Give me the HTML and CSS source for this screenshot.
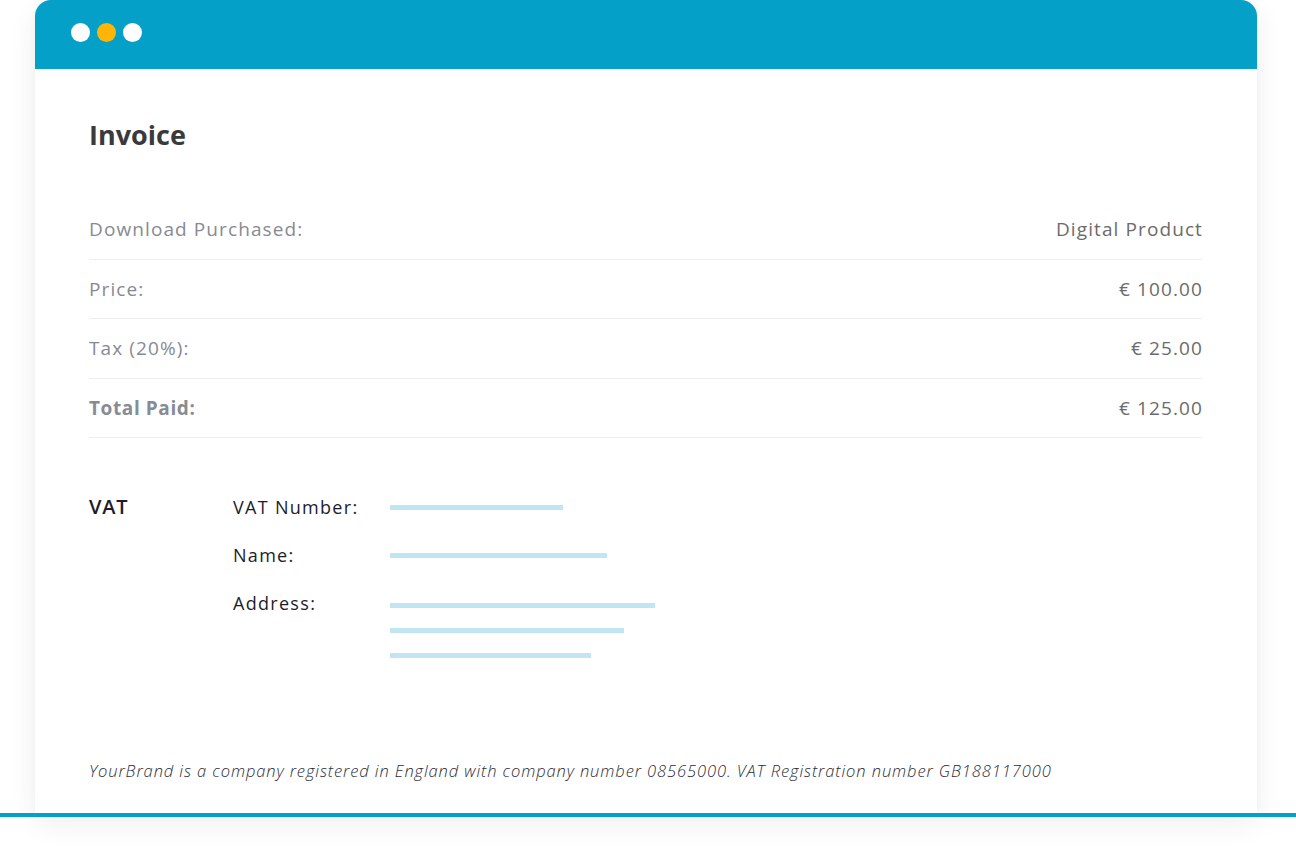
FILE: index.html
```html
<!DOCTYPE html>
<html>
<head>
<meta charset="utf-8">
<link rel="stylesheet" href="styles.css">
</head>
<body>
<div class="stage">
  <div class="card">
    <div class="card-header">
      <span class="dot dot-white"></span>
      <span class="dot dot-orange"></span>
      <span class="dot dot-white"></span>
    </div>
    <div class="card-body">
      <h1 class="title">Invoice</h1>
      <div class="rows">
        <div class="row"><span class="label">Download Purchased:</span><span class="value">Digital Product</span></div>
        <div class="row"><span class="label">Price:</span><span class="value">€ 100.00</span></div>
        <div class="row"><span class="label">Tax (20%):</span><span class="value">€ 25.00</span></div>
        <div class="row"><span class="label label-bold">Total Paid:</span><span class="value">€ 125.00</span></div>
      </div>
      <div class="vat">
        <div class="vat-title">VAT</div>
        <div class="vat-fields">
          <div class="vat-label">VAT Number:</div>
          <div class="bars"><span class="bar bar-1"></span></div>
          <div class="vat-label">Name:</div>
          <div class="bars"><span class="bar bar-2"></span></div>
          <div class="vat-label">Address:</div>
          <div class="bars bars-address"><span class="bar bar-3"></span><span class="bar bar-4"></span><span class="bar bar-5"></span></div>
        </div>
      </div>
      <p class="footnote">YourBrand is a company registered in England with company number 08565000. VAT Registration number GB188117000</p>
    </div>
  </div>
  <div class="baseline"></div>
</div>
</body>
</html>
```

FILE: styles.css
```css
html, body {
  margin: 0;
  padding: 0;
  background: #ffffff;
}
body {
  font-family: "Open Sans", "DejaVu Sans", sans-serif;
  overflow: hidden;
}
.stage {
  position: relative;
  width: 1296px;
  height: 859px;
}
.card {
  margin-left: 35px;
  width: 1222px;
  height: 813px;
  background: #ffffff;
  border-radius: 16px 16px 0 0;
  box-shadow: 0 10px 30px rgba(0, 0, 0, 0.07), 0 0 6px rgba(0, 0, 0, 0.03);
  overflow: hidden;
}
.card-header {
  height: 69px;
  background: #04a0c8;
  display: flex;
  align-items: center;
  gap: 7px;
  padding-left: 36px;
  box-sizing: border-box;
  padding-bottom: 5px;
}
.dot {
  width: 19px;
  height: 19px;
  border-radius: 50%;
}
.dot-white { background: #ffffff; }
.dot-orange { background: #ffb508; }
.card-body {
  padding: 49px 55px 0 54px;
}
.title {
  margin: 0 0 48px 0;
  font-size: 27px;
  line-height: 34px;
  font-weight: 700;
  color: #3a3a3c;
  letter-spacing: 0;
}
.rows {
  display: flex;
  flex-direction: column;
}
.row {
  height: 58.5px;
  border-bottom: 1px solid #eeeeee;
  display: flex;
  justify-content: space-between;
  align-items: center;
  font-size: 19px;
  letter-spacing: 1.1px;
}
.label { color: #878a93; }
.label-bold { font-weight: 700; color: #888b94; letter-spacing: 0.6px; }
.value { color: #6b6b6b; margin-right: -1px; }
.vat {
  display: flex;
  margin-top: 57px;
  color: #1c1d2b;
}
.vat-title {
  width: 144px;
  font-size: 20px;
  font-weight: 600;
  line-height: 24px;
  letter-spacing: 0.8px;
}
.vat-fields {
  display: grid;
  grid-template-columns: 157px 1fr;
  row-gap: 24px;
}
.vat-label {
  font-size: 18px;
  line-height: 24px;
  font-weight: 500;
  letter-spacing: 1.3px;
}
.bars {
  display: flex;
  flex-direction: column;
  gap: 20px;
  padding-top: 10px;
}
.bars-address {
  padding-top: 12px;
}
.bar {
  display: block;
  height: 5px;
  background: #c1e6f1;
}
.bar-1 { width: 173px; }
.bar-2 { width: 217px; }
.bar-3 { width: 265px; }
.bar-4 { width: 234px; }
.bar-5 { width: 201px; }
.footnote {
  margin: 103px 0 0 0;
  font-size: 16.5px;
  line-height: 20px;
  font-style: italic;
  font-weight: 300;
  color: #2a2b38;
  letter-spacing: 0.9px;
  white-space: nowrap;
}
.baseline {
  width: 1296px;
  height: 4px;
  background: #04a0c8;
}
```
